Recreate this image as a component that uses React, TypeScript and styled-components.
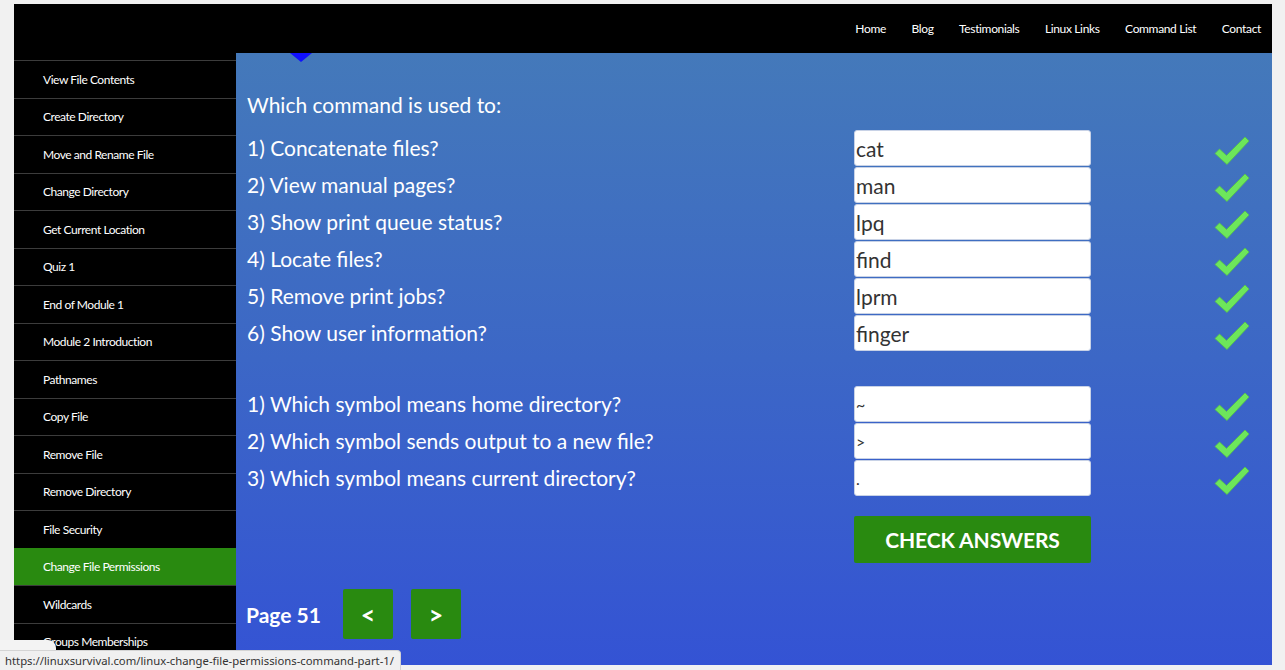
import React from "react";
import styled, { createGlobalStyle } from "styled-components";

const Global = createGlobalStyle`
  html, body { margin: 0; padding: 0; background: #f1f1f1; }
  body { font-family: Lato, "Liberation Sans", sans-serif; }
  * { box-sizing: border-box; }
`;

const Frame = styled.div`
  padding: 4px 13px 5px 14px;
  height: 670px;
`;

const Page = styled.div`
  display: grid;
  grid-template-columns: 222px 1fr;
  grid-template-rows: 49px 612px;
  height: 661px;
  overflow: hidden;
`;

const Header = styled.header`
  grid-column: 1 / 3;
  background: #000;
  display: flex;
  justify-content: flex-end;
  align-items: center;
  padding-right: 11px;
  gap: 25.5px;
`;

const NavLink = styled.a`
  color: #fff;
  font-size: 12px;
  letter-spacing: -0.35px;
  text-decoration: none;
`;

const Sidebar = styled.nav`
  background: #000;
  padding-top: 7px;
  display: flex;
  flex-direction: column;
`;

const SideItem = styled.div<{ $active?: boolean }>`
  height: 37.5px;
  flex: none;
  display: flex;
  align-items: center;
  padding-left: 29px;
  border-top: 1px solid ${(p) => (p.$active ? "#298a10" : "#3c3c3c")};
  background: ${(p) => (p.$active ? "#298a10" : "#000")};
  color: #fff;
  font-size: 12px;
  letter-spacing: -0.45px;
`;

const Content = styled.main`
  position: relative;
  background: linear-gradient(180deg, #4479ba 0%, #3c67c6 50%, #3453d4 100%);
  padding: 39px 0 0 11px;
  color: #fff;
`;

const Pointer = styled.div`
  position: absolute;
  top: 0;
  left: 54px;
  width: 0;
  height: 0;
  border-left: 11px solid transparent;
  border-right: 11px solid transparent;
  border-top: 9px solid #1010ff;
`;

const Title = styled.div`
  font-size: 21px;
  height: 26px;
  line-height: 26px;
  margin-bottom: 12px;
`;

const QuizGroup = styled.div<{ $gapAbove?: number }>`
  display: grid;
  grid-template-columns: 607px 237px 123px 36px;
  grid-auto-rows: 37px;
  align-items: center;
  margin-top: ${(p) => p.$gapAbove ?? 0}px;
`;

const Question = styled.div`
  font-size: 21px;
  line-height: 26px;
  margin-top: -1px;
`;

const Answer = styled.input<{ $small?: boolean }>`
  width: 237px;
  height: 36px;
  border: 1px solid #c8d2e6;
  border-radius: 3px;
  background: #fff;
  font-family: Lato, "Liberation Sans", sans-serif;
  font-size: ${(p) => (p.$small ? 16 : 21)}px;
  color: #333;
  padding: 0 0 0 1px;
  outline: none;
  align-self: start;
`;

const CheckCell = styled.div`
  grid-column: 4;
  display: flex;
  align-items: flex-end;
  height: 37px;
  padding-bottom: 1px;
`;

const ButtonRow = styled.div`
  display: grid;
  grid-template-columns: 607px 237px;
  margin-top: 19px;
`;

const CheckButton = styled.button`
  grid-column: 2;
  height: 47px;
  border: none;
  border-radius: 2px;
  background: #298a10;
  color: #fff;
  font-family: Lato, "Liberation Sans", sans-serif;
  font-weight: 700;
  font-size: 21px;
  letter-spacing: -0.1px;
  cursor: pointer;
`;

const Pager = styled.div`
  display: flex;
  align-items: center;
  margin-top: 26px;
  margin-left: -1px;
`;

const PageLabel = styled.div`
  font-size: 21px;
  font-weight: 700;
  margin-right: 22px;
`;

const PageButton = styled.button`
  width: 50px;
  height: 50px;
  border: none;
  border-radius: 2px;
  background: #298a10;
  color: #fff;
  font-family: Lato, "Liberation Sans", sans-serif;
  font-weight: 700;
  font-size: 25px;
  margin-right: 18px;
  padding: 0;
`;

const StatusBar = styled.div`
  position: fixed;
  left: 0;
  bottom: 0;
  height: 20px;
  padding: 0 6px 0 5px;
  display: flex;
  align-items: center;
  background: #f0f0f0;
  border: 1px solid #d4d4d4;
  border-left: none;
  border-bottom: none;
  border-top-right-radius: 4px;
  color: #333;
  font-family: "Noto Sans", "DejaVu Sans", sans-serif;
  font-size: 11.3px;
`;

const StatusTab = styled.div`
  position: fixed;
  left: 0;
  bottom: 20px;
  width: 56px;
  height: 10px;
  background: #f3f3f3;
  border-top-right-radius: 8px;
`;

function Check() {
  return (
    <svg width="36" height="30" viewBox="0 0 36 30">
      <path
        d="M1 17.5 L5.5 13 L12.5 19.5 L31 1 L35 5 L13 28.5 Z"
        fill="#6de65b"
        stroke="#55c24a"
        strokeWidth="0.8"
        strokeLinejoin="round"
      />
    </svg>
  );
}

const nav = ["Home", "Blog", "Testimonials", "Linux Links", "Command List", "Contact"];

const side = [
  "View File Contents",
  "Create Directory",
  "Move and Rename File",
  "Change Directory",
  "Get Current Location",
  "Quiz 1",
  "End of Module 1",
  "Module 2 Introduction",
  "Pathnames",
  "Copy File",
  "Remove File",
  "Remove Directory",
  "File Security",
  "Change File Permissions",
  "Wildcards",
  "Groups Memberships",
];

const commands: [string, string][] = [
  ["1) Concatenate files?", "cat"],
  ["2) View manual pages?", "man"],
  ["3) Show print queue status?", "lpq"],
  ["4) Locate files?", "find"],
  ["5) Remove print jobs?", "lprm"],
  ["6) Show user information?", "finger"],
];

const symbols: [string, string][] = [
  ["1) Which symbol means home directory?", "~"],
  ["2) Which symbol sends output to a new file?", ">"],
  ["3) Which symbol means current directory?", "."],
];

function Rows({ items, small }: { items: [string, string][]; small?: boolean }) {
  return (
    <>
      {items.map(([q, a]) => (
        <React.Fragment key={q}>
          <Question>{q}</Question>
          <Answer $small={small} defaultValue={a} />
          <CheckCell>
            <Check />
          </CheckCell>
        </React.Fragment>
      ))}
    </>
  );
}

export default function App() {
  return (
    <>
      <Global />
      <Frame>
        <Page>
          <Header>
            {nav.map((n) => (
              <NavLink key={n} href="#">
                {n}
              </NavLink>
            ))}
          </Header>
          <Sidebar>
            {side.map((s) => (
              <SideItem key={s} $active={s === "Change File Permissions"}>
                {s}
              </SideItem>
            ))}
          </Sidebar>
          <Content>
            <Pointer />
            <Title>Which command is used to:</Title>
            <QuizGroup>
              <Rows items={commands} />
            </QuizGroup>
            <QuizGroup $gapAbove={34}>
              <Rows items={symbols} small />
            </QuizGroup>
            <ButtonRow>
              <CheckButton>CHECK ANSWERS</CheckButton>
            </ButtonRow>
            <Pager>
              <PageLabel>Page 51</PageLabel>
              <PageButton>&lt;</PageButton>
              <PageButton>&gt;</PageButton>
            </Pager>
          </Content>
        </Page>
      </Frame>
      <StatusTab />
      <StatusBar>https://linuxsurvival.com/linux-change-file-permissions-command-part-1/</StatusBar>
    </>
  );
}
